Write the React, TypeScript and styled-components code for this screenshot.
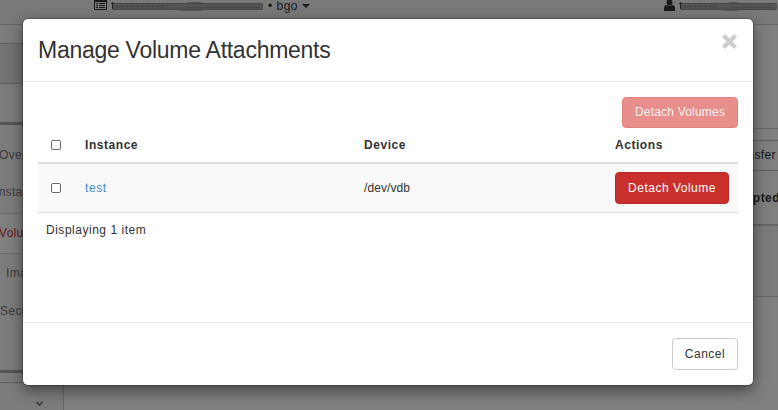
import React from "react";
import styled, { createGlobalStyle } from "styled-components";

const Global = createGlobalStyle`
  * { box-sizing: border-box; }
  body { margin: 0; overflow: hidden; background: #fff; color: #333; font: 12px/19px "Liberation Sans", Arial, sans-serif; }
`;
const Page = styled.div`
  width: 778px; height: 410px; position: relative; overflow: hidden;
  display: flex; flex-direction: column;
`;
const Header = styled.header`
  height: 25px; flex: none; border-bottom: 1px solid #c6c6c6; background: #f3f3f3;
  display: flex; align-items: flex-start; justify-content: space-between; padding-left: 94px;
`;
const Context = styled.div`
  display: flex; align-items: center; height: 12px; line-height: 12px; gap: 4px;
  font-size: 12px; letter-spacing: 0.4px;
`;
const Columns = styled.div`flex: 1; display: flex; min-height: 0;`;
const Sidebar = styled.nav`
  width: 64px; flex: none; border-right: 1px solid #ccc; background: #f9f9f9; padding-top: 18px;
  display: flex; flex-direction: column;
`;
const Band = styled.div`height: 41px; flex: none; background: #e3e7ea; border: solid #b8bdc0; border-width: 1px 0;`;
const Group = styled.div`
  margin-top: 38px; height: 251px; flex: none; border: solid #aaa; border-width: 3px 0; padding-top: 11px;
`;
const NavItem = styled.div<{ $x: number; $h: number; $active?: boolean }>`
  height: ${(p) => p.$h}px; line-height: 38px; margin-left: ${(p) => p.$x}px; white-space: nowrap;
  letter-spacing: 0.3px; color: ${(p) => (p.$active ? "#c9302c" : "#777")};
  background: ${(p) => (p.$active ? "#fff" : "none")};
  border: solid #d5d5d5; border-width: ${(p) => (p.$active ? "1px 0" : "0")};
`;
const Collapse = styled.div`
  margin-top: 9px; flex: 1; border-top: 1px solid #bbb; padding: 17px 0 0 35px;
  svg { display: block; }
`;
const Main = styled.main`flex: 1; display: flex; flex-direction: column; padding-top: 103px;`;
const Rule = styled.div<{ $h?: number }>`height: ${(p) => p.$h ?? 1}px; background: #ccc; flex: none;`;
const Transfer = styled.div`
  margin-top: 11px; height: 31px; border: solid #bbb; border-width: 1px 0; text-align: right; line-height: 29px;
  padding-right: 2px; letter-spacing: 0.4px;
`;
const Encrypted = styled.div`
  height: 53px; line-height: 54px; font-weight: bold; display: flex; justify-content: flex-end; letter-spacing: 0.45px;
  span { margin-right: -2px; }
`;
const Row = styled.div`height: 70px; background: #f9f9f9;`;
const Backdrop = styled.div`position: absolute; inset: 0; background: rgba(0, 0, 0, 0.5);`;
const Dialog = styled.section`
  position: absolute; left: 23px; top: 19px; width: 730px; height: 366px; background: #fff; border-radius: 5px;
  box-shadow: 0 0 0 1px rgba(0, 0, 0, 0.2), 0 5px 15px rgba(0, 0, 0, 0.5);
  display: flex; flex-direction: column;
`;
const DialogHead = styled.header`
  height: 63px; border-bottom: 1px solid #e5e5e5; padding: 0 15px;
  display: flex; justify-content: space-between; align-items: flex-start;
`;
const Title = styled.h3`
  margin: 16px 0 0; font-size: 23px; line-height: 30px; font-weight: 400; letter-spacing: -0.27px; white-space: nowrap;
`;
const Close = styled.button`margin: 15px 1px 0 0; padding: 0; border: 0; background: none; svg { display: block; }`;
const Body = styled.div`height: 240px; padding: 15px; display: flex; flex-direction: column;`;
const Button = styled.button<{ $kind?: "danger" }>`
  font: 12px/18px "Liberation Sans", Arial, sans-serif; letter-spacing: 0.5px; height: 32px; padding: 0;
  border-radius: 4px; white-space: nowrap; border: 1px solid ${(p) => (p.$kind ? "#b52b27" : "#ccc")};
  background: ${(p) => (p.$kind ? "#c9302c" : "#fff")}; color: ${(p) => (p.$kind ? "#fff" : "#333")};
`;
const BulkDetach = styled(Button)`
  width: 116px; height: 31px; align-self: flex-end; background: #e88f8c; border-color: #e38380; color: #fdf1f0;
  letter-spacing: 0.2px; padding-bottom: 2px;
`;
const Compact = styled(Button)`width: 66px;`;
const Wide = styled(Button)`width: 114px;`;
const TableRow = styled.div<{ $head?: boolean }>`
  display: grid; grid-template-columns: 39px 279px 251px 1fr; align-items: center; padding-left: 8px;
  height: ${(p) => (p.$head ? 36 : 49)}px; font-weight: ${(p) => (p.$head ? 700 : 400)};
  letter-spacing: ${(p) => (p.$head ? 0.55 : 0.08)}px;
  background: ${(p) => (p.$head ? "#fff" : "#f9f9f9")};
  border-bottom: ${(p) => (p.$head ? 2 : 1)}px solid #ddd;
`;
const Check = styled.input`
  appearance: none; margin: 0 0 0 5px; width: 10px; height: 10px; border: 1px solid #686868; border-radius: 2px; background: #fff;
`;
const Link = styled.a`color: #428bca; text-decoration: none; letter-spacing: 0.6px;`;
const Count = styled.div`padding: 8px; letter-spacing: 0.52px;`;
const Foot = styled.footer`
  flex: 1; border-top: 1px solid #e5e5e5; padding: 15px; display: flex; justify-content: flex-end; align-items: flex-start;
`;

const Redacted = ({ width }: { width: number }) => (
  <svg width={width} height="12" viewBox={`0 0 ${width} 12`}>
    <rect x="1" y="3" width={width - 2} height="7" rx="1" fill="#a8a8a8" />
    <path d={`M2 3.5H${width - 2}M2 9.5H${width - 2}`} stroke="#8c8c8c" fill="none" />
    <path d="M1.5 2v7M0 3.5h3" stroke="#444" fill="none" />
    <path d={`M4 6.5H${width * 0.35}M${width * 0.5} 7.5H${width - 4}`} stroke="#909090" />
    <path d={`M6 6.5H${width * 0.4}`} stroke="#777" strokeWidth="5" strokeDasharray="1 4" opacity=".4" />
    <path d={`M${width * 0.45} 10.5h${width * 0.15}M${width * 0.5} 2.5h${width * 0.1}`} stroke="#b0b0b0" />
  </svg>
);

export default function App() {
  return (
    <>
      <Global />
      <Page>
        <Header>
          <Context>
            <svg width="13" height="12" viewBox="0 0 13 12">
              <path d="M.5 .5h12v9H.5z" fill="none" stroke="#333" />
              <path d="M0 0h13v2H0zM2 3h2v1H2zM5 3h6v1H5zM2 5h2v1H2zM5 5h6v1H5zM2 7h2v1H2zM5 7h6v1H5z" fill="#333" />
            </svg>
            <Redacted width={153} /><span>•</span><span>bgo</span>
            <svg width="8" height="12"><path d="M0 4h8L4 8z" fill="#333" /></svg>
          </Context>
          <Context>
            <svg width="11" height="12">
              <circle cx="5.5" cy="2.5" r="3" fill="#333" />
              <path d="M0 11V8q0-3 3-3 2.5 2 5 0 3 0 3 3v3z" fill="#333" />
            </svg>
            <Redacted width={99} />
          </Context>
        </Header>
        <Columns>
          <Sidebar>
            <Band />
            <Group>
              <NavItem $x={-1} $h={37}>Overview</NavItem>
              <NavItem $x={-5} $h={40}>Instances</NavItem>
              <NavItem $x={-1} $h={41} $active>Volumes</NavItem>
              <NavItem $x={6} $h={38}>Images</NavItem>
              <NavItem $x={0} $h={38}>Security</NavItem>
            </Group>
            <Collapse><svg width="9" height="8"><path d="M1.5 2l3 3 3-3" fill="none" stroke="#666" strokeWidth="1.4" /></svg></Collapse>
          </Sidebar>
          <Main>
            <Rule />
            <Transfer>Transfer</Transfer>
            <Encrypted><span>Encrypted</span></Encrypted>
            <Rule $h={2} />
            <Row />
            <Rule />
          </Main>
        </Columns>
        <Backdrop />
        <Dialog role="dialog">
          <DialogHead>
            <Title>Manage Volume Attachments</Title>
            <Close aria-label="Close">
              <svg width="15" height="15" viewBox="0 0 15 15">
                <path d="M3 3l9 9M12 3l-9 9" stroke="#ccc" strokeWidth="4.2" strokeLinecap="square" strokeLinejoin="round" />
              </svg>
            </Close>
          </DialogHead>
          <Body>
            <BulkDetach $kind="danger">Detach Volumes</BulkDetach>
            <TableRow $head><Check type="checkbox" /><span>Instance</span><span>Device</span><span>Actions</span></TableRow>
            <TableRow><Check type="checkbox" /><Link>test</Link><span>/dev/vdb</span><Wide $kind="danger">Detach Volume</Wide></TableRow>
            <Count>Displaying 1 item</Count>
          </Body>
          <Foot><Compact>Cancel</Compact></Foot>
        </Dialog>
      </Page>
    </>
  );
}
